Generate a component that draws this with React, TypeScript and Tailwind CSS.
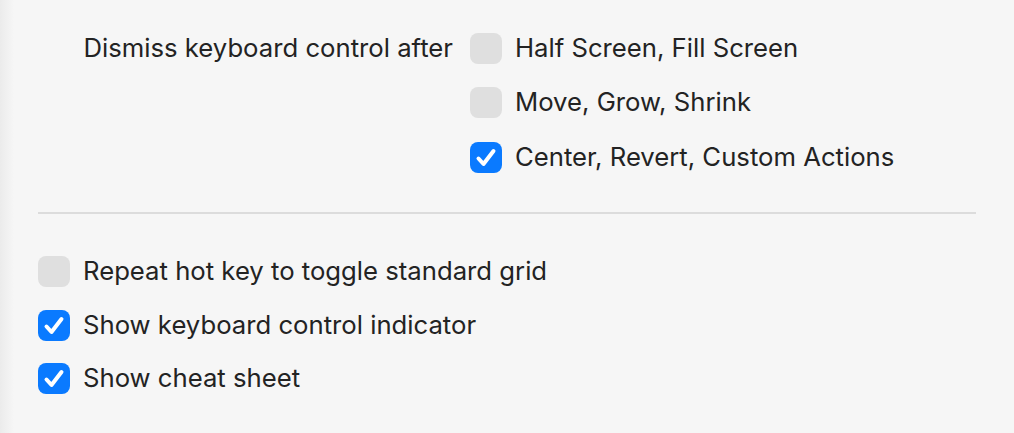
import React from "react";

function Box({ checked }: { checked: boolean }) {
  return checked ? (
    <div className="w-[32px] h-[31px] rounded-[8px] bg-[#0a7aff] flex items-center justify-center shrink-0">
      <svg width="32" height="31" viewBox="0 0 32 31">
        <path d="M8.5 16.5 L13.5 22 L23.5 9" fill="none" stroke="white" strokeWidth="4" strokeLinecap="round" strokeLinejoin="round" />
      </svg>
    </div>
  ) : (
    <div className="w-[32px] h-[31px] rounded-[8px] bg-[#dfdfdf] shrink-0" />
  );
}

function Row({ checked, label, tall }: { checked: boolean; label: string; tall?: boolean }) {
  return (
    <div className={tall ? "flex items-center gap-[13px] h-[54.5px]" : "flex items-center gap-[13px] h-[53.5px]"}>
      <Box checked={checked} />
      <span>{label}</span>
    </div>
  );
}

export default function App() {
  return (
    <div
      className="w-[1014px] h-[433px] bg-[linear-gradient(to_right,#ebebeb_0px,#f6f6f6_14px,#f6f6f6_100%)] text-[#232323] text-[25.7px] overflow-hidden"
      style={{ fontFamily: "Inter, 'Noto Sans', sans-serif" }}
    >
      <div className="pl-[38px] pr-[38px] pt-[21px]">
        <div className="flex">
          <div className="w-[432px] h-[54.5px] flex items-center justify-end pr-[17px]">
            Dismiss keyboard control after
          </div>
          <div className="flex flex-col">
            <Row tall checked={false} label="Half Screen, Fill Screen" />
            <Row tall checked={false} label="Move, Grow, Shrink" />
            <Row tall checked={true} label="Center, Revert, Custom Actions" />
          </div>
        </div>
        <div className="mt-[27.5px] h-[2px] bg-[#dcdcdc]" />
        <div className="mt-[31px] flex flex-col">
          <Row checked={false} label="Repeat hot key to toggle standard grid" />
          <Row checked={true} label="Show keyboard control indicator" />
          <Row checked={true} label="Show cheat sheet" />
        </div>
      </div>
    </div>
  );
}
